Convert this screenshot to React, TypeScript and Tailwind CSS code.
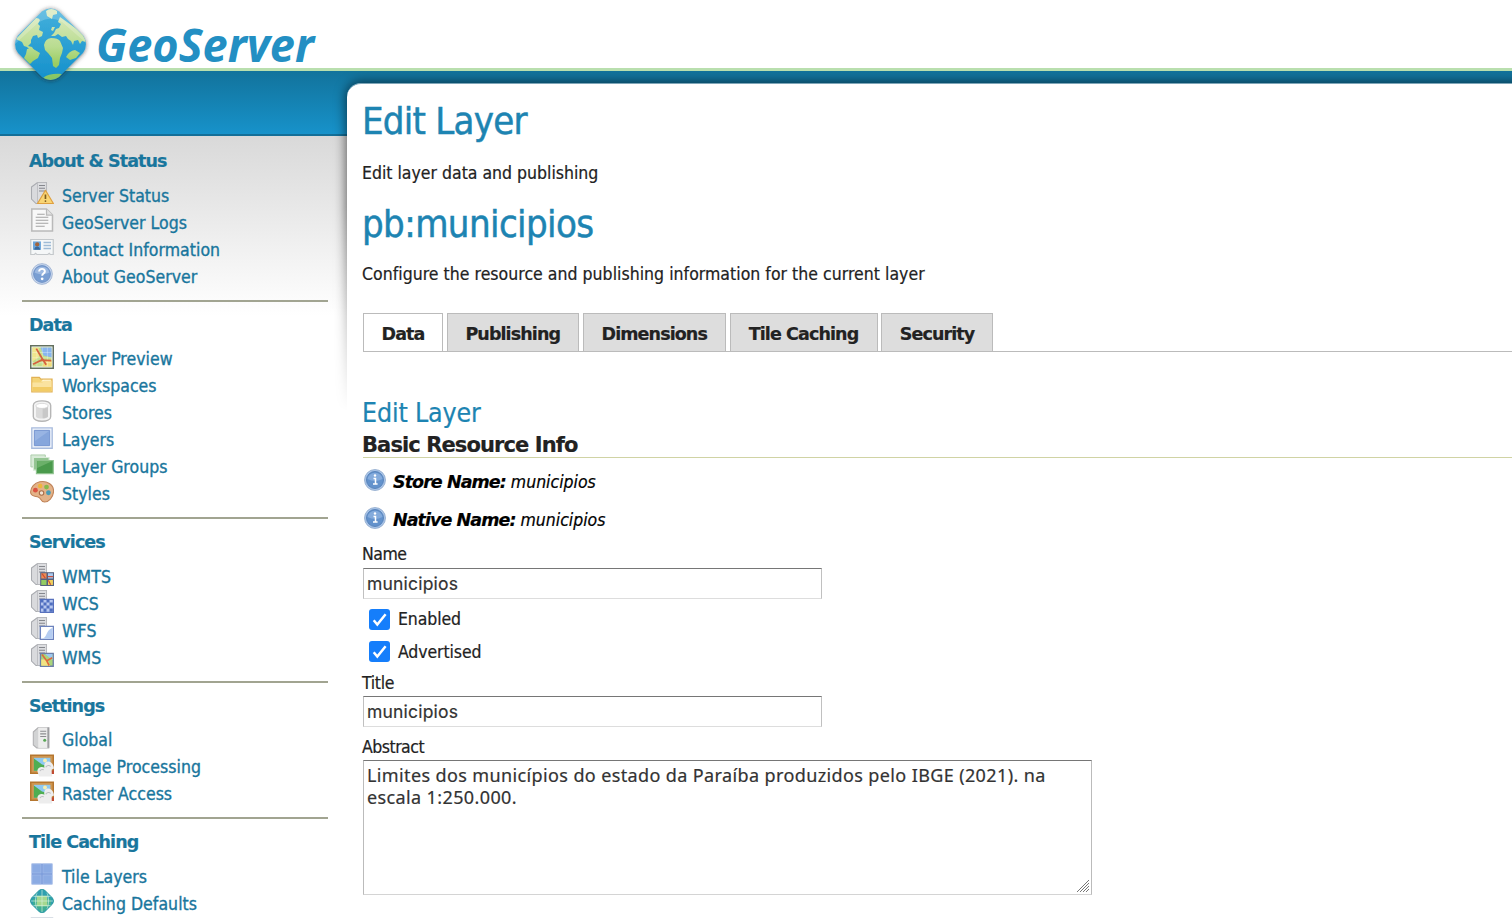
import React from "react";

type IconProps = { name: string };

function Tower() {
  return (
    <>
      <path d="M1 4 5 1h6v14H4L1 12z" fill="#d9dadd" stroke="#a9abb0" strokeWidth=".7" />
      <path d="M5 1h6v14H5z" fill="#dcdde0" stroke="#b4b6ba" strokeWidth=".5" />
      <path d="M6 3h4M6 4.8h4M6 6.6h4" stroke="#85878d" strokeWidth=".7" />
    </>
  );
}

function PictureFrame() {
  return (
    <>
      <path d="M0 1h16v13H0z" fill="#b5762f" />
      <path d="M1 2h14v11H1z" fill="#cf9650" />
      <path d="M2.6 3.2h11v8.6h-11z" fill="#8ec9f2" />
      <path d="M2.6 3.6 8 7.6l5 1.4v2.8H2.6z" fill="#4fae52" />
      <circle cx="10" cy="5" r="1.3" fill="#f7efb0" />
      <path d="M5 12.4c-.4-3 3.2-3.6 4.6-2.6-.8-4 2.600-5 4.400-3.400 1.400 1 1.800 2.400 2 4l-1.500.6.3 4.600H6z" fill="#ededed" />
      <path d="M10.5 9.5c.6-1.4 2.500-1.600 3.300-.5M6.600 12c.6-1 1.600-1.200 2.600-.8" stroke="#bdbfc2" strokeWidth=".7" />
      <path d="M14.5 11.6H16V14h-1.5z" fill="#c04a32" />
    </>
  );
}

function MapTile() {
  return (
    <>
      <path d="M7 7h8.5v8.5H7z" fill="#a9d57b" stroke="#6c7fa8" strokeWidth=".9" />
      <path d="M10 7.4h5v4z" fill="#9cc8f3" />
      <path d="M7.5 11h4l2 4.2h-6z" fill="#f2e383" />
      <path d="m8 7.6 3 4 1.8 3.4m-1.6-3.2 3.6-2" stroke="#dd6b3c" strokeWidth="1.1" fill="none" />
    </>
  );
}

function Icon({ name }: IconProps) {
  return (
    <svg viewBox="0 0 16 16" className="-mt-1.5 h-6 w-6 shrink-0" fill="none">
      {name === "status" && (
        <>
          <Tower />
          <path d="M10.3 6.2 15.6 15H5z" fill="#f9d574" stroke="#dfa040" strokeWidth=".8" strokeLinejoin="round" />
          <path d="M10.3 9v3" stroke="#7c5a1d" strokeWidth="1.1" />
          <circle cx="10.3" cy="13.4" r=".6" fill="#7c5a1d" />
        </>
      )}
      {name === "logs" && (
        <>
          <path d="M1.2.7H11l4 4v10.600H1.200z" fill="#f8f8f8" stroke="#b9b9b9" />
          <path d="M11 .7v4h4" fill="#e2e2e2" stroke="#b9b9b9" strokeWidth=".8" />
          <path d="M4.8 4.2h5M3.8 6.2h8.4M3.8 8.2h8.4M3.8 10.2h8.4M3.8 12.2h6" stroke="#a3a3a3" strokeWidth=".7" />
        </>
      )}
      {name === "contact" && (
        <>
          <path d="M.5 3h15v10h-2l-.7-.8-.9.8H4.600l-.9-.8-.7.8H.5z" fill="#f5f7f8" stroke="#c4c8cb" strokeWidth=".8" />
          <path d="M2 4.3h5.3v5.6H2z" fill="#6aa5db" />
          <circle cx="4.8" cy="6.3" r="1.4" fill="#a3643b" />
          <path d="M2.8 9.9c.2-3 3.7-3 4 0z" fill="#39689b" />
          <path d="M9 5h5M9 7h5M9 9h5" stroke="#9fbbd6" strokeWidth=".9" />
        </>
      )}
      {name === "about" && (
        <>
          <circle cx="8" cy="8" r="6.9" fill="#c8d7ee" stroke="#9fb3d3" strokeWidth=".6" />
          <circle cx="8" cy="8" r="5.6" fill="#7a9fd3" stroke="#6c8ec4" strokeWidth=".6" />
          <path d="M3 7a5.2 5.2 0 0 1 10 0c-3 1.600-7 1.600-10 0z" fill="#9db9e1" />
          <path d="M6.1 6.4c0-2.5 3.900-2.300 3.800-.1 0 1.400-1.800 1.400-1.800 2.900" stroke="#fff" strokeWidth="1.3" />
          <circle cx="8.1" cy="11.2" r=".9" fill="#fff" />
        </>
      )}
      {name === "preview" && (
        <>
          <path d="M.5.5h15v15H.5z" fill="#fff" stroke="#63705f" />
          <path d="M1.6 1.6h12.800v12.800H1.600z" fill="#c3dd8b" />
          <path d="M7 1.600h7.400v6.800L9 7z" fill="#89b5ef" />
          <path d="M1.600 1.600h4.200L6 8l-4.400 3z" fill="#f0e58d" />
          <path d="M10 10.500h4.400v3.900H8z" fill="#f3dc7a" />
          <path d="M4.600 1.600v12.800M8.200 1.600v12.800M11.600 1.600v12.800M1.600 5h12.800M1.600 8.500h12.800M1.600 11.800h12.800" stroke="#fff" strokeOpacity=".4" strokeWidth=".5" />
          <path d="m4.200 2.400 4 6.800 2.600 4M2 12.800l5.600-2.700 6.600.3" stroke="#d5623f" strokeWidth="1.2" />
        </>
      )}
      {name === "workspace" && (
        <>
          <path d="M1.200 3.600h5l1 1.200h7.500v8.400H1.200z" fill="#f4d477" stroke="#e2b255" strokeWidth=".8" />
          <path d="M2 6.400h5.400l1.200-1.200h5.300v1.200H2z" fill="#fff6d3" />
          <path d="M1.600 7h6.600l1.200-1.100h5v6.900H1.600z" fill="#fae3a0" />
          <path d="M1.600 10h12.800v2.800H1.600z" fill="#f2cc66" />
        </>
      )}
      {name === "store" && (
        <>
          <path d="M2.200 4.200C2.200.2 13.800.2 13.800 4.200v7.600c0 4-11.600 4-11.600 0z" fill="#f4f4f4" stroke="#b5b5b5" strokeWidth=".9" />
          <path d="M4 4.800v7c1 1.700 7 1.700 8 0v-7z" fill="#dadada" />
          <path d="M8.400 5.400H12v6.300c-.7.8-2 1.200-3.600 1.200z" fill="#c8c8c8" />
          <ellipse cx="8" cy="4.600" rx="4.100" ry="1.700" fill="#fff" stroke="#cfcfcf" strokeWidth=".5" />
        </>
      )}
      {name === "layer" && (
        <>
          <path d="M1.200 1.200h13.600v13.600H1.200z" fill="#eef3fb" stroke="#a8bbdd" strokeWidth=".9" />
          <path d="M2.900 2.900h10.200v10.200H2.900z" fill="#86a6dc" stroke="#6f90ce" strokeWidth=".6" />
          <path d="M3.300 3.300h9.400L3.300 10z" fill="#98b4e3" />
        </>
      )}
      {name === "group" && (
        <>
          <path d="M.6 1.300h9.600v8H.6z" fill="#d7ead6" stroke="#a9cba8" strokeWidth=".6" />
          <path d="M2.300 3h10.400v8.400H2.300z" fill="#95c593" stroke="#d9ebd8" strokeWidth=".7" />
          <path d="M4.300 5h11.200v8.800H4.300z" fill="#4a9a4c" stroke="#8fc28e" strokeWidth=".8" />
          <path d="M4.800 5.400h10.200L4.800 10z" fill="#6bb069" />
        </>
      )}
      {name === "style" && (
        <>
          <path d="M6.500 1.200C11 .2 16 3 15.700 7.700c-.2 4-3.400 7-6 7-2.800 0-2-2.500-4-3.200C3.600 10.700.5 11.200.4 8.200.3 5 3 2 6.500 1.200z" fill="#e3b288" stroke="#c08358" strokeWidth=".7" />
          <circle cx="3.600" cy="6.800" r="1.600" fill="#dc5240" />
          <circle cx="6.800" cy="4" r="1.500" fill="#f0b43c" />
          <circle cx="11" cy="4.700" r="1.600" fill="#86b94a" />
          <circle cx="12.300" cy="8.500" r="1.600" fill="#4a9bb4" />
          <circle cx="7.700" cy="8.600" r="1.500" fill="#f4e4d4" stroke="#a86c46" strokeWidth=".7" />
        </>
      )}
      {name === "wmts" && (
        <>
          <Tower />
          <path d="M6.800 6.800H16V16H6.800z" fill="#55607e" />
          <path d="M7.500 7.500H11V11H7.500z" fill="#ee8b52" />
          <path d="M12 7.500h3.300V11H12z" fill="#a9caf1" />
          <path d="M7.500 12H11v3.300H7.500z" fill="#93cc62" />
          <path d="M12 12h3.300v3.300H12z" fill="#f0d05d" />
          <path d="m8 7.800 2.200 3M12.200 12.200l1.600 3M12 9.800h3.300" stroke="#cd4e38" strokeWidth=".8" />
        </>
      )}
      {name === "wcs" && (
        <>
          <Tower />
          <path d="M6.900 6.900h8.700v8.700H6.900z" fill="#b6c7ef" stroke="#5871bd" strokeWidth=".8" />
          <path d="M7 7h2v2H7zM11 7h2v2h-2zM9 9h2v2H9zM13 9h2.200v2H13zM7 11h2v2H7zM11 11h2v2h-2zM9 13h2v2.200H9zM13 13h2.200v2.200H13z" fill="#4f6fc0" />
        </>
      )}
      {name === "wfs" && (
        <>
          <Tower />
          <path d="M6.900 6.900h8.700v8.700H6.900z" fill="#fff" stroke="#6c82bd" strokeWidth=".9" />
          <path d="M15.100 7.800v7.300H7.500c4.500-.3 2.500-5.500 7.600-7.300z" fill="#b4ccf1" />
        </>
      )}
      {name === "wms" && (
        <>
          <Tower />
          <MapTile />
        </>
      )}
      {name === "global" && (
        <>
          <path d="M2.200 4 5.500 1h7v13.600h-8l-2.300-2z" fill="#d2d3d4" stroke="#b0b0b2" strokeWidth=".7" />
          <path d="M5.500 1h7v13.600h-7z" fill="#ececec" />
          <path d="M12.200 1v13.600" stroke="#9d9da0" strokeWidth="1.300" />
          <path d="M6.800 3.500h4M6.800 5.200h4M6.800 7h4" stroke="#8c8d90" strokeWidth=".8" />
          <circle cx="9.800" cy="9.500" r="1" fill="#58a755" />
        </>
      )}
      {name === "image" && <PictureFrame />}
      {name === "tile" && (
        <>
          <path d="M1 1h14v14H1z" fill="#7f9fdc" />
          <path d="M1.500 1.500h5.800v5.800H1.500zM8.700 1.500h5.800v5.800H8.700zM1.500 8.700h5.800v5.800H1.500zM8.700 8.700h5.800v5.800H8.700z" fill="#8babe3" stroke="#a5bcea" strokeWidth=".4" />
        </>
      )}
      {name === "cache" && (
        <>
          <path d="M6.300.7q1.700-1.100 3.400 0L15 6q1.400 2 0 4l-5.300 5.300q-1.700 1.100-3.400 0L1 10q-1.400-2 0-4z" fill="#2f9fb0" />
          <path d="M2 6.500h12v4L9 15H7l-5-5z" fill="#3fae92" />
          <path d="M4.500 4.500h7v7h-7z" fill="#a5d88f" />
          <path d="M4.700 2.500C3.300 6 3.300 10 4.700 13.500M8 .4v15.200M11.300 2.500c1.400 3.500 1.400 7.500 0 11M2 4.900h12M.4 8h15.200M2 11.100h12" stroke="#d3f0df" strokeOpacity=".75" strokeWidth=".6" />
          <path d="M6.300.7q1.700-1.100 3.400 0L15 6q1.400 2 0 4l-5.300 5.300q-1.700 1.100-3.400 0L1 10q-1.400-2 0-4z" stroke="#2a9a9c" strokeWidth=".6" />
        </>
      )}
      {name === "disk" && <path d="M1 1.500h14V15H1z" fill="#dbe3ee" stroke="#b3bfce" />}
    </svg>
  );
}

type Section = { title: string; items: [string, string][] };

const sections: Section[] = [
  {
    title: "About & Status",
    items: [
      ["status", "Server Status"],
      ["logs", "GeoServer Logs"],
      ["contact", "Contact Information"],
      ["about", "About GeoServer"],
    ],
  },
  {
    title: "Data",
    items: [
      ["preview", "Layer Preview"],
      ["workspace", "Workspaces"],
      ["store", "Stores"],
      ["layer", "Layers"],
      ["group", "Layer Groups"],
      ["style", "Styles"],
    ],
  },
  {
    title: "Services",
    items: [
      ["wmts", "WMTS"],
      ["wcs", "WCS"],
      ["wfs", "WFS"],
      ["wms", "WMS"],
    ],
  },
  {
    title: "Settings",
    items: [
      ["global", "Global"],
      ["image", "Image Processing"],
      ["image", "Raster Access"],
    ],
  },
  {
    title: "Tile Caching",
    items: [
      ["tile", "Tile Layers"],
      ["cache", "Caching Defaults"],
      ["disk", ""],
    ],
  },
];

const gem = "M42 11.500Q50.500 5.500 59 11.500L83 35.500Q89 44.500 83 53L59 77Q50.500 83 42 77L18 53Q12 44.500 18 35.500Z";

function Logo() {
  return (
    <svg viewBox="0 0 330 90" className="h-[90px] w-[330px] shrink-0">
      <defs>
        <linearGradient id="sea" x1="0" y1="0" x2="0" y2="1">
          <stop offset="0" stopColor="#43b0dc" />
          <stop offset="1" stopColor="#1590cb" />
        </linearGradient>
        <linearGradient id="land" gradientUnits="userSpaceOnUse" x1="0" y1="14" x2="0" y2="80">
          <stop offset="0" stopColor="#d9e9bd" />
          <stop offset=".5" stopColor="#b9dc90" />
          <stop offset=".75" stopColor="#9bcd62" />
          <stop offset="1" stopColor="#84c465" />
        </linearGradient>
        <filter id="glow" x="-20%" y="-20%" width="140%" height="140%">
          <feDropShadow dx="0" dy="0.500" stdDeviation="2" floodColor="#222" floodOpacity=".65" />
        </filter>
        <clipPath id="gem">
          <path d={gem} />
        </clipPath>
      </defs>
      <path d={gem} fill="url(#sea)" filter="url(#glow)" />
      <g clipPath="url(#gem)" fill="url(#land)">
        <path d="M16 39 36 18q3 0 4 2l-2 4 2 2-1 4 4 2-1 4-4 2-1-3-4 1-2 4 0 3-3 3 4 1 2 3-3 1-4-4-3-1-2-4z" />
        <path d="M27 49q6-1 8 1l5 3-2 5-5 3-3 3-6-6 2-4z" />
        <path d="M46 11q5-4 11 0l0 3-4 1-1 4-5-3z" />
        <path d="M60 17 58 22l3 2-2 4-3 1-2 4-3 3 4 0 3-2 4 3 4-1 2 3 3 2 2 4 1-4 4-1 2 4 2-3 4 1-1-7z" />
        <path d="M44 45q1-6 7-7 7 0 9 3l3 7-1 5-2 5-1 7-3 3-3-2-1-8-4-5-3-3z" />
        <path d="M66 57q3-6 9-7l5 3-4 5-6 2z" />
        <path d="M43 78q6-5 19-4l-5 6H46z" />
        <path d="m52 27 3 0-2 4-2-1z" />
      </g>
      <path clipPath="url(#gem)" d="M15 38 42 11q8-6 17 0l26 27v4L62 22q-11-7-23 0L15 44z" fill="#fff" opacity=".2" />
      <text x="96" y="62" textLength="218" lengthAdjust="spacingAndGlyphs" fill="#238fc3" className="font-['Noto_Sans'] text-[47px] font-bold italic">
        GeoServer
      </text>
    </svg>
  );
}

function InfoIcon() {
  return (
    <svg viewBox="0 0 24 24" className="-mt-1 ml-px h-6 w-6 shrink-0">
      <circle cx="12" cy="12" r="10.500" fill="#a9c4e8" stroke="#8fa9cc" strokeWidth=".8" />
      <circle cx="12" cy="12" r="8.500" fill="#6392cc" stroke="#5480b8" strokeWidth=".9" />
      <path d="M4.500 11a7.600 7.600 0 0 1 15 0q-7.500 4-15 0z" fill="#84abdc" />
      <path d="M10.500 10.500h2v5.500m-2.500 0h4.600" stroke="#fff" strokeWidth="1.500" fill="none" />
      <circle cx="12" cy="7.500" r="1.200" fill="#fff" />
    </svg>
  );
}

function Check({ label, nudge }: { label: string; nudge: string }) {
  return (
    <label className="flex h-[21px] items-center gap-[8.500px] pl-[6.500px]">
      <svg viewBox="0 0 21 21" className="h-[21px] w-[21px]">
        <rect width="21" height="21" rx="3" fill="#157efb" />
        <path d="m4.700 11.300 3.600 4.200 8.300-10.200" fill="none" stroke="#fff" strokeWidth="2.500" />
      </svg>
      <span className={"tracking-[-0.1px] " + nudge}>{label}</span>
    </label>
  );
}

function TextField({ value }: { value: string }) {
  return (
    <div className="ml-px flex h-[31px] w-[459px] items-center border border-t-[#767676] border-r-[#c0c0c0] border-b-[#ddd] border-l-[#c0c0c0] pl-[3px] pt-px font-['Inter',sans-serif] text-[17.500px] tracking-[0.2px] text-[#333]">
      {value}
    </div>
  );
}

const tabs: [string, string][] = [
  ["Data", "w-[80px]"],
  ["Publishing", "w-[132.500px]"],
  ["Dimensions", "w-[143.500px]"],
  ["Tile Caching", "w-[148px]"],
  ["Security", "w-[112px]"],
];

export default function App() {
  return (
    <div className="flex h-[918px] w-[1512px] flex-col overflow-hidden bg-white font-['DejaVu_Sans_Condensed','DejaVu_Sans',sans-serif] text-[17.500px] text-[#222] [-webkit-text-stroke:0.2px]">
      <header className="relative z-10 h-[71px] shrink-0 border-b-[3px] border-[#b9dfae] bg-white">
        <Logo />
      </header>
      <div className="flex min-h-0 flex-1 bg-linear-to-b from-[#12739c] to-[#1793cb] to-[64px]">
        <aside className="w-[347px] shrink-0">
          <div className="h-[65px] border-b-2 border-[#136f98]" />
          <nav className="h-[782px] bg-linear-to-b from-[#d9d9d9] to-white to-[180px] pl-[22px] pt-[2px]">
            {sections.map((s) => (
              <section key={s.title} className="w-[306px] border-b-2 border-[#a1a491] pb-[9px] pl-2 pt-[10px]">
                <h3 className="-ml-px h-[34.500px] font-['DejaVu_Sans'] text-[17.500px] font-bold leading-[27px] tracking-[-0.92px] text-[#19769d]">{s.title}</h3>
                <ul>
                  {s.items.map(([icon, label]) => (
                    <li key={label} className="flex h-[27px] items-center gap-2 whitespace-nowrap text-[#19769d]">
                      <Icon name={icon} />
                      {label && <a className="tracking-[0.04px] [-webkit-text-stroke:0.35px]">{label}</a>}
                    </li>
                  ))}
                </ul>
              </section>
            ))}
          </nav>
        </aside>
        <div className="relative min-w-0 flex-1 pt-3">
          <div className="absolute -left-4 right-0 top-0 h-[340px] overflow-hidden pl-4 pt-3 mask-b-from-40%">
            <div className="-mr-4 h-[400px] rounded-tl-[14px] shadow-[0_0_12px_1px_rgba(0,0,0,0.6)]" />
          </div>
          <main className="relative h-[840px] rounded-tl-[14px] border-t border-[#7fa6b8] bg-white pl-[15px]">
            <h1 className="pt-[12px] text-[38px] leading-[50px] tracking-[-0.75px] text-[#1d84b2] [-webkit-text-stroke:0.5px]">Edit Layer</h1>
            <p className="mt-[14px] leading-[26px]">Edit layer data and publishing</p>
            <h1 className="mt-[13px] text-[38px] leading-[50px] tracking-[-0.6px] text-[#1d84b2] [-webkit-text-stroke:0.5px]">pb:municipios</h1>
            <p className="mt-[12px] leading-[26px] tracking-[0.03px]">Configure the resource and publishing information for the current layer</p>
            <div className="ml-px mt-[26px] flex h-[39px] gap-[3.500px] border-b border-[#bbb]">
              {tabs.map(([t, w], i) => (
                <div key={t} className={"flex items-center justify-center whitespace-nowrap border border-b-0 border-[#bbb] pt-[3px] font-['DejaVu_Sans'] font-bold tracking-[-0.9px] " + w + (i === 0 ? " bg-white" : " bg-[#ddd]")}>
                  {t}
                </div>
              ))}
            </div>
            <h2 className="mt-[43px] text-[26.500px] leading-[36px] tracking-[-0.15px] text-[#1d84b2]">Edit Layer</h2>
            <h3 className="ml-px h-[27px] border-b border-[#d0d3a4] pt-px font-['DejaVu_Sans'] text-[21px] font-bold leading-[26px] tracking-[-0.9px]">
              <span className="-ml-px">Basic Resource Info</span>
            </h3>
            <ul className="mt-[5px] italic text-black">
              <li className="flex h-[38px] items-center">
                <InfoIcon />
                <span className="ml-1.5 whitespace-pre"><b className="font-['DejaVu_Sans'] tracking-[-0.94px]">Store Name:</b> municipios</span>
              </li>
              <li className="flex h-[38px] items-center">
                <InfoIcon />
                <span className="ml-1.5 whitespace-pre"><b className="font-['DejaVu_Sans'] tracking-[-0.94px]">Native Name:</b> municipios</span>
              </li>
            </ul>
            <div className="mt-[2px] leading-[26px] tracking-[-0.5px]">Name</div>
            <div className="mt-px">
              <TextField value="municipios" />
            </div>
            <div className="mt-[10px] flex flex-col gap-[11px]">
              <Check label="Enabled" nudge="-mt-px" />
              <Check label="Advertised" nudge="mt-px" />
            </div>
            <div className="mt-[8px] leading-[26px] tracking-[-0.3px]">Title</div>
            <TextField value="municipios" />
            <div className="mt-[7px] leading-[26px] tracking-[-0.5px]">Abstract</div>
            <div className="ml-px flex h-[135px] w-[729px] items-end justify-between border border-t-[#767676] border-r-[#bbb] border-b-[#d4d4d4] border-l-[#bbb] pl-[3px]">
              <p className="h-[130px] whitespace-nowrap font-['Noto_Sans'] text-[18px] leading-[22px] tracking-[0.38px] text-[#333]">
                Limites dos municípios do estado da Paraíba produzidos pelo IBGE (2021). na
                <br />
                escala 1:250.000.
              </p>
              <svg viewBox="0 0 14 14" className="mb-px mr-px h-3.5 w-3.5 shrink-0">
                <path d="M1 13 13 1M4 13 13 4M7 13l6-6M10 13l3-3" stroke="#777" strokeWidth="1" />
              </svg>
            </div>
          </main>
        </div>
      </div>
    </div>
  );
}
